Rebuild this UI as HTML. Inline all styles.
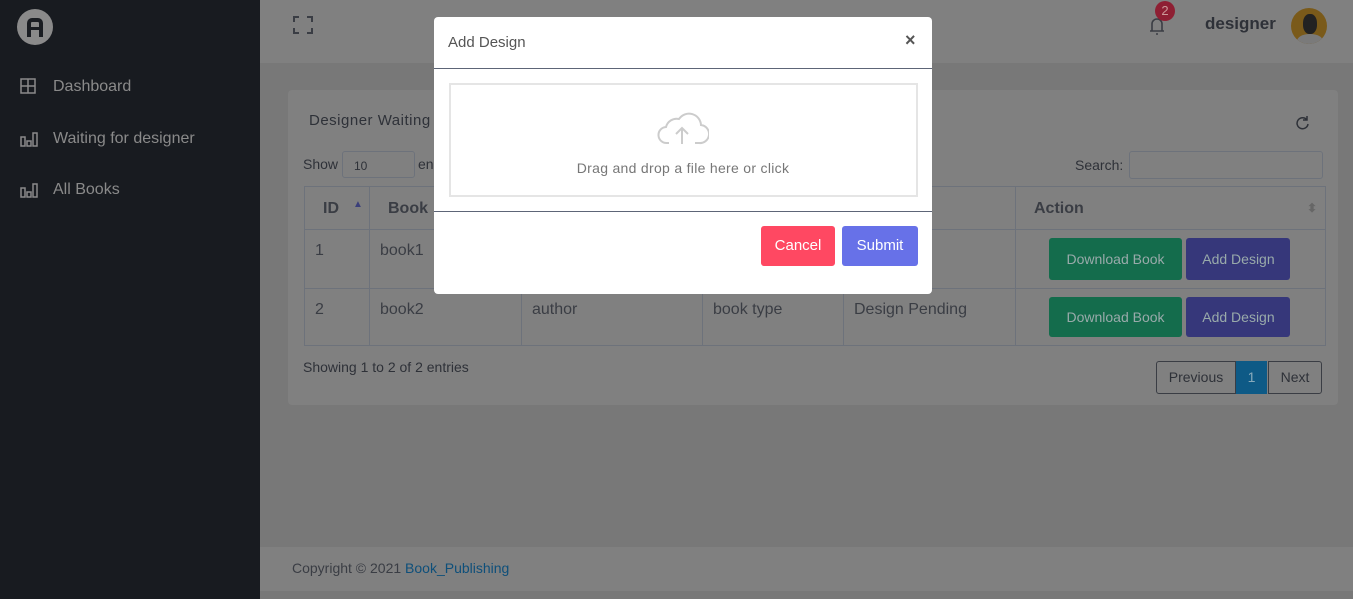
<!DOCTYPE html>
<html><head><meta charset="utf-8"><style>
*{box-sizing:border-box;margin:0;padding:0}
body{width:1353px;height:599px;overflow:hidden;background:#787878;font-family:"Liberation Sans",sans-serif;position:relative}
.sb{position:absolute;left:0;top:0;width:260px;height:599px;background:#181b20}
.sb .logo{position:absolute;left:17px;top:9px;width:36px;height:36px;border-radius:50%;background:#8a8a8a}
.nav{position:absolute;left:20px;color:#8a8a8a;font-size:16px}
.nav span{position:absolute;left:33px;top:1px;white-space:nowrap}
.top{position:absolute;left:260px;top:0;width:1093px;height:63px;background:#808080}
.card{position:absolute;left:288px;top:90px;width:1050px;height:315px;background:#808080;border-radius:4px}
.t{position:absolute;color:#2e3138;font-size:14px;white-space:nowrap}
table{position:absolute;left:304px;top:186px;border-collapse:collapse;font-size:16px;color:#3a3d44;table-layout:fixed;width:1021px}
td,th{border:1px solid #6d727b;text-align:left;vertical-align:top;padding:12px 10px 10px}
th{height:43px;font-weight:bold;font-size:16px;vertical-align:middle;padding:2px 18px 0;white-space:nowrap}
.btn{display:inline-block;color:#9aa;font-size:14px;padding:0;height:42px;line-height:42px;border-radius:3px;text-align:center}
.foot{position:absolute;left:260px;top:547px;width:1093px;height:44px;background:#808080}
.modal{position:absolute;left:434px;top:17px;width:498px;height:277px;background:#fff;border-radius:4px}
</style></head><body>
<div class="sb">
 <div class="logo"><div style="position:absolute;left:10px;top:9px;width:16px;height:19px;border:4px solid #1a1d22;border-bottom:none;border-radius:5px 5px 0 0"></div><div style="position:absolute;left:12px;top:18px;width:12px;height:3px;background:#1a1d22"></div></div>
 <div class="nav" style="top:77px"><svg width="16" height="16" viewBox="0 0 16 16" style="margin-top:1px"><rect x="1" y="1" width="14" height="14" fill="none" stroke="#8a8a8a" stroke-width="1.5"/><path d="M8 1V15M1 8H15" stroke="#8a8a8a" stroke-width="1.5"/></svg><span>Dashboard</span></div>
 <div class="nav" style="top:129px"><svg width="18" height="16" viewBox="0 0 18 16" style="margin-top:2px"><path d="M1 6h4v9H1zM7 10h4v5H7zM13 2h4v13h-4z" fill="none" stroke="#8a8a8a" stroke-width="1.5"/></svg><span>Waiting for designer</span></div>
 <div class="nav" style="top:180px"><svg width="18" height="16" viewBox="0 0 18 16" style="margin-top:2px"><path d="M1 6h4v9H1zM7 10h4v5H7zM13 2h4v13h-4z" fill="none" stroke="#8a8a8a" stroke-width="1.5"/></svg><span>All Books</span></div>
</div>
<div class="top">
 <svg style="position:absolute;left:33px;top:16px" width="20" height="18" viewBox="0 0 20 18"><path d="M1 6V1h5M14 1h5v5M19 12v5h-5M6 17H1v-5" fill="none" stroke="#3a3d44" stroke-width="2"/></svg>
 <svg style="position:absolute;left:886px;top:14px" width="22" height="22" viewBox="0 0 22 22"><path d="M4 17h14M6 17V10a5 5 0 0110 0v7M10 20h2" fill="none" stroke="#3a3d44" stroke-width="1.6"/></svg>
 <div style="position:absolute;left:895px;top:1px;width:20px;height:20px;border-radius:50%;background:#8e1f33;color:#c99;font-size:13px;text-align:center;line-height:20px">2</div>
 <div class="t" style="left:945px;top:14px;font-size:17px;color:#2e3138;font-weight:bold">designer</div>
 <div style="position:absolute;left:1031px;top:8px;width:36px;height:36px;border-radius:50%;background:#7a5a1a;overflow:hidden"><div style="position:absolute;left:12px;top:6px;width:14px;height:20px;border-radius:45%;background:#222"></div><div style="position:absolute;left:6px;top:26px;width:26px;height:14px;border-radius:50%;background:#7a7a7a"></div></div>
</div>
<div class="card"></div>
<div class="t" style="left:309px;top:112px;font-size:15px;letter-spacing:.5px">Designer Waiting</div>
<svg style="position:absolute;left:1295px;top:115px" width="15" height="15" viewBox="0 0 15 15"><path d="M12 5A5.5 5.5 0 1 0 13 9M12 1v4H8" fill="none" stroke="#2e3138" stroke-width="1.5"/></svg>
<div class="t" style="left:303px;top:156px">Show</div>
<div style="position:absolute;left:342px;top:151px;width:73px;height:27px;border:1px solid #6d727b;border-radius:3px;font-size:12px;color:#2e3138;padding:7px 11px">10</div>
<div class="t" style="left:418px;top:156px">en</div>
<div class="t" style="left:1075px;top:157px">Search:</div>
<div style="position:absolute;left:1129px;top:151px;width:194px;height:28px;border:1px solid #6d727b;border-radius:3px"></div>
<table>
<tr><th style="width:65px;position:relative">ID<span style="position:absolute;left:48px;top:12px;color:#3b3f7a;font-size:10px">▲</span></th><th style="width:152px">Book</th><th style="width:181px"></th><th style="width:141px"></th><th style="width:172px">Status</th><th style="width:310px;position:relative">Action<span style="position:absolute;right:8px;top:14px;color:#666;font-size:12px">⬍</span></th></tr>
<tr style="height:59px"><td>1</td><td>book1</td><td></td><td></td><td>Success</td><td style="padding:8px 0 0 33px"><span class="btn" style="background:#146c4c;width:133px">Download Book</span> <span class="btn" style="background:#36377a;width:104px">Add Design</span></td></tr>
<tr style="height:57px"><td>2</td><td>book2</td><td>author</td><td>book type</td><td>Design Pending</td><td style="padding:8px 0 0 33px"><span class="btn" style="background:#146c4c;width:133px;height:40px;line-height:40px">Download Book</span> <span class="btn" style="background:#36377a;width:104px;height:40px;line-height:40px">Add Design</span></td></tr>
</table>
<div class="t" style="left:303px;top:359px">Showing 1 to 2 of 2 entries</div>
<div style="position:absolute;left:1156px;top:361px;width:80px;height:33px;border:1px solid #3a3d44;border-radius:3px 0 0 3px;font-size:14px;color:#2e3138;text-align:center;line-height:31px">Previous</div>
<div style="position:absolute;left:1236px;top:361px;width:31px;height:33px;background:#0e5a86;font-size:14px;color:#8ab;text-align:center;line-height:33px">1</div>
<div style="position:absolute;left:1268px;top:361px;width:54px;height:33px;border:1px solid #3a3d44;border-radius:0 3px 3px 0;font-size:14px;color:#2e3138;text-align:center;line-height:31px">Next</div>
<div class="foot"><div class="t" style="left:32px;top:13px;color:#3a3d44">Copyright © 2021 <span style="color:#0e4f7a">Book_Publishing</span></div></div>
<div class="modal">
 <div class="t" style="left:14px;top:17px;font-size:15px;color:#555">Add Design</div>
 <div class="t" style="left:471px;top:13px;font-size:18px;color:#555;font-weight:bold">×</div>
 <div style="position:absolute;left:0;top:51px;width:498px;height:1px;background:#5d6577"></div>
 <div style="position:absolute;left:15px;top:66px;width:469px;height:114px;border:2px solid #e5e5e5"></div>
 <svg style="position:absolute;left:223px;top:94px" width="52" height="34" viewBox="0 0 52 34"><path d="M12 32H10A8 8 0 0 1 9 16 A11 11 0 0 1 22 8 A12 12 0 0 1 44 14 A9 9 0 0 1 42 32H38M25 33V17M19 23l6-6 6 6" fill="none" stroke="#ccc" stroke-width="2"/></svg>
 <div class="t" style="left:0;width:498px;text-align:center;top:143px;color:#777;font-size:14px;letter-spacing:.3px">Drag and drop a file here or click</div>
 <div style="position:absolute;left:0;top:194px;width:498px;height:1px;background:#5d6577"></div>
 <div style="position:absolute;left:327px;top:209px;width:74px;height:40px;background:#ff4862;border-radius:3px;color:#fff;font-size:15px;text-align:center;line-height:40px">Cancel</div>
 <div style="position:absolute;left:408px;top:209px;width:76px;height:40px;background:#6771e8;border-radius:3px;color:#fff;font-size:15px;text-align:center;line-height:40px">Submit</div>
</div>
</body></html>
